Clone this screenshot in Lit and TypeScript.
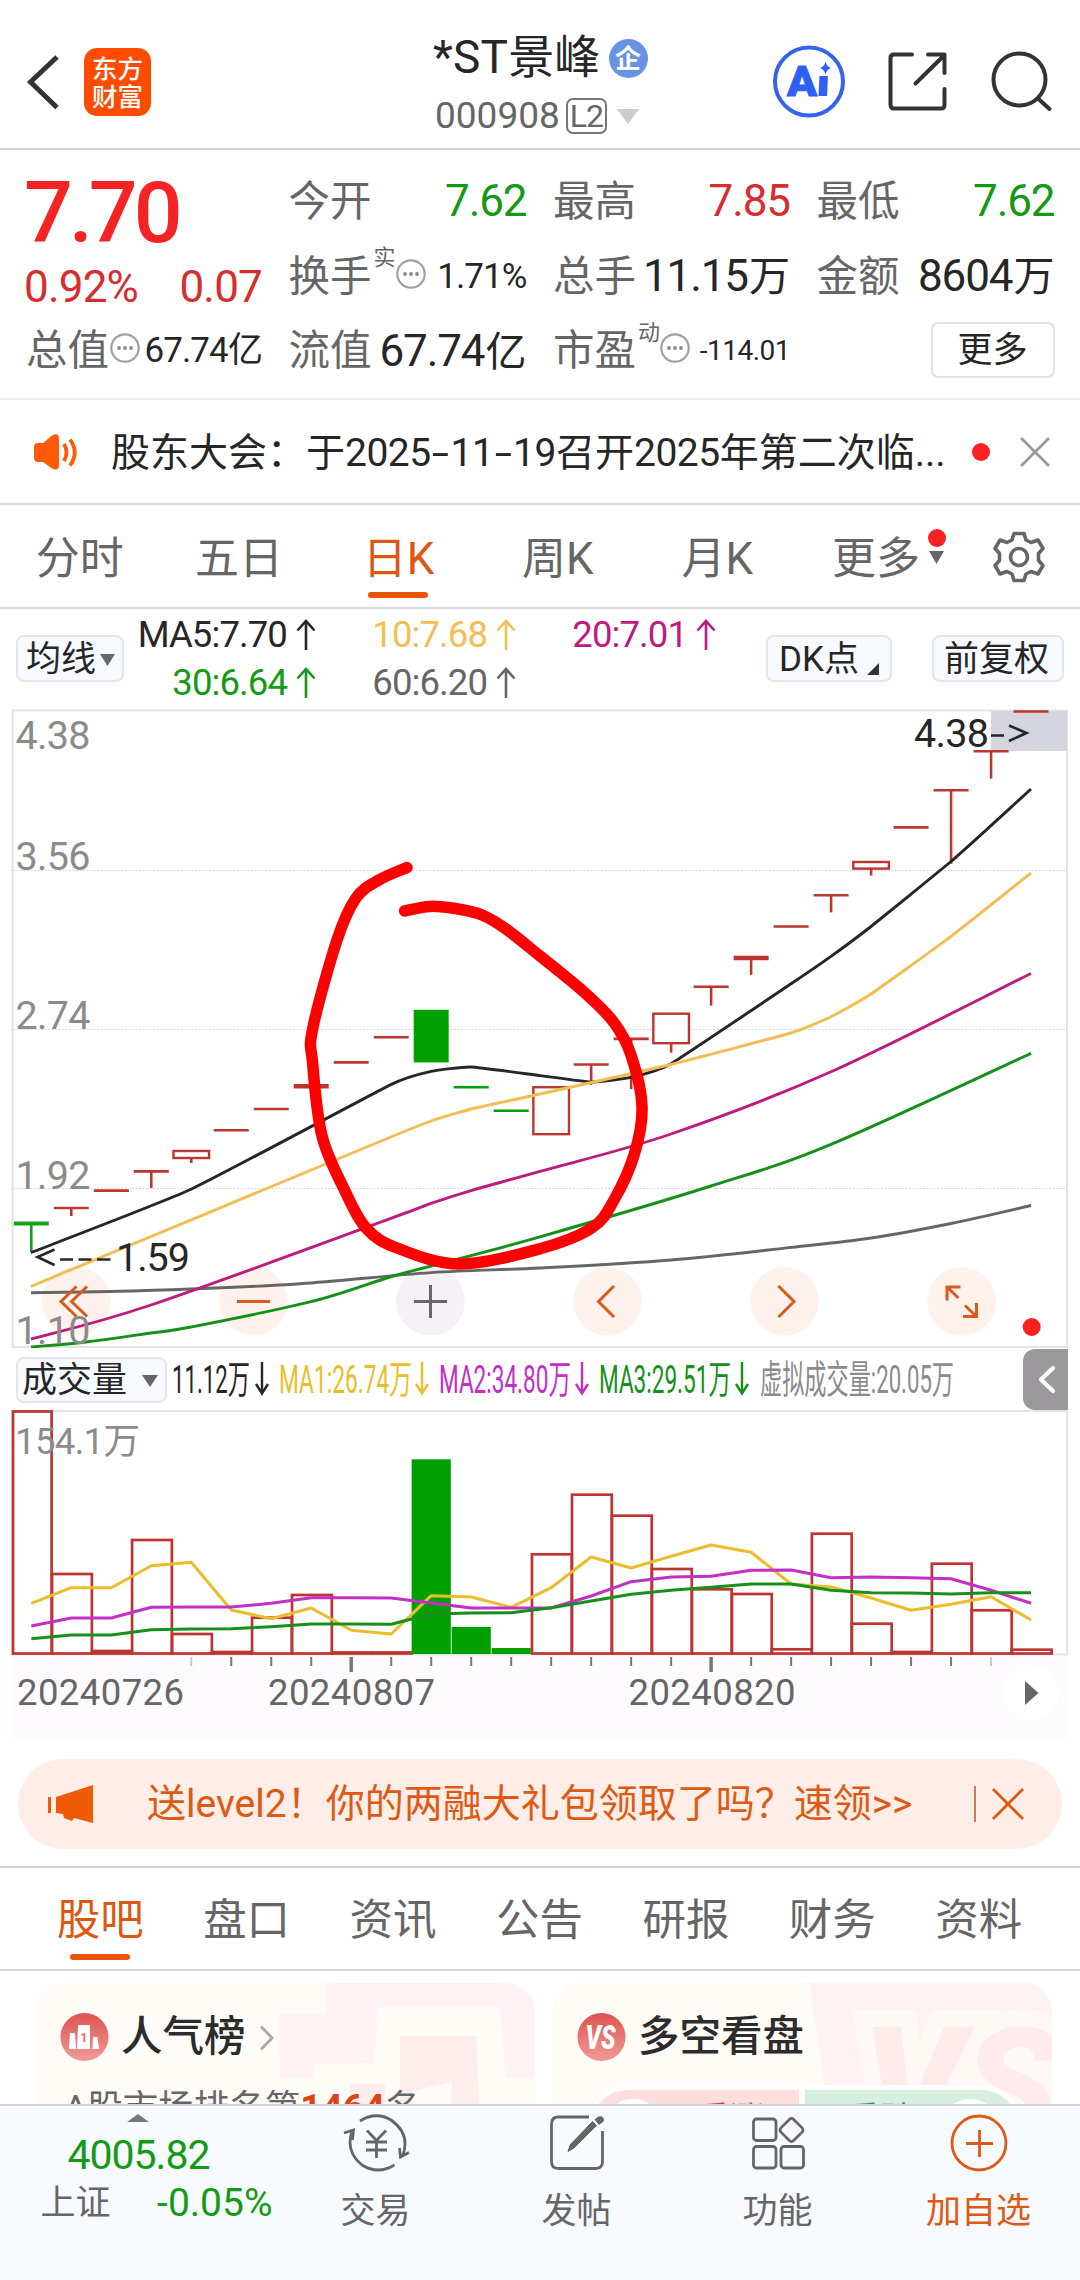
import { LitElement, html, css, svg } from "lit";
import { customElement } from "lit/decorators.js";

type Pt = [number, number];

const RED = "#bd3531";
const GREEN = "#00a000";
const X0 = 31.3;
const STEP = 39.99;
const cx = (i: number) => X0 + STEP * i;

/* Candle: t = top or flat level, b = body bottom, w = wick end, s = line weight, g = falling day */
interface Candle { t: number; b?: number; w?: number; s?: number; g?: boolean }
const candles: Candle[] = [
  { t: 1223.5, w: 1252, s: 4, g: true }, { t: 1208, w: 1216 }, { t: 1190.6 }, { t: 1171.4, w: 1188 },
  { t: 1151, b: 1158, w: 1163 }, { t: 1130.3 }, { t: 1109 }, { t: 1086.3, s: 4.5 }, { t: 1062.4 }, { t: 1037.2 },
  { t: 1009.8, b: 1062.4, g: true }, { t: 1087.2, g: true }, { t: 1110.7, g: true }, { t: 1087.2, b: 1134.2 },
  { t: 1064.5, w: 1085 }, { t: 1038.9, w: 1089 }, { t: 1013.7, b: 1043.2, w: 1052.6 }, { t: 986.8, w: 1005.6 },
  { t: 958, w: 974.8, s: 4.5 }, { t: 926.5 }, { t: 895.3, w: 912.4 }, { t: 862, b: 868.6, w: 875.6 },
  { t: 827.4 }, { t: 790.2, w: 863.7 }, { t: 751.3, w: 778.6 }, { t: 711.5 },
];

const ma: { c: string; p: Pt[] }[] = [
  { c: "#666666", p: [[31, 1292.7], [110, 1291.5], [191, 1289], [300, 1283.8], [431, 1272.6], [540, 1268], [671, 1260], [791, 1247.4], [871, 1238], [951, 1223.5], [1031, 1205.5]] },
  { c: "#16901a", p: [[31, 1347], [86, 1342], [151, 1333], [191, 1327], [311, 1301.7], [390, 1277], [431, 1266], [540, 1236.8], [711, 1186], [831, 1144.4], [1031, 1053.4]] },
  { c: "#bd1c7c", p: [[31, 1339], [151, 1305], [390.8, 1218.4], [431, 1203.4], [471, 1190.6], [540, 1171.4], [671, 1134], [831, 1071.8], [1031, 973.5]] },
  { c: "#262626", p: [[31, 1252.6], [191, 1189.3], [390.8, 1084.6], [431, 1071.4], [471, 1067], [540, 1075.6], [591, 1082], [631, 1077.4], [671, 1063.7], [791, 983.8], [831, 956.4], [871, 926.5], [951, 861.5], [991, 825.6], [1031, 789]] },
  { c: "#f3bd54", p: [[31, 1286.3], [390.8, 1137], [431, 1121], [471, 1109], [540, 1094], [671, 1064.5], [791, 1033], [831, 1016.7], [871, 994], [951, 936.3], [1031, 873]] },
];

const markPts: Pt[] = [[407, 867.5], [379, 880], [356, 898], [337, 940], [312.6, 1029], [312.6, 1063], [322, 1136], [345, 1191], [366, 1228], [397, 1248], [460, 1264], [540, 1248.7], [591.6, 1228], [614, 1200], [634.7, 1153], [642, 1106], [631, 1055], [614, 1022.6], [585, 993], [540, 956], [506, 929], [482, 915], [458, 909], [430, 906.4], [404.6, 911]];

function smooth(p: Pt[], k = 6): string {
  let d = `M${p[0][0]} ${p[0][1]}`;
  for (let i = 0; i < p.length - 1; i++) {
    const a = p[Math.max(i - 1, 0)], b = p[i], c = p[i + 1], e = p[Math.min(i + 2, p.length - 1)];
    d += ` C${b[0] + (c[0] - a[0]) / k} ${b[1] + (c[1] - a[1]) / k} ${c[0] - (e[0] - b[0]) / k} ${c[1] - (e[1] - b[1]) / k} ${c[0]} ${c[1]}`;
  }
  return d;
}

const volTops = [1411.5, 1574, 1651, 1540, 1634, 1652, 1617.7, 1595, 1652.5, 1652.5, 1459.3, 1627, 1648, 1554.3, 1494.7, 1515.7, 1569, 1589.3, 1594, 1649.3, 1533.7, 1623.7, 1652, 1563.7, 1610.3, 1649.7];
const volMa = [
  { c: "#ebbd2b", y: [1603.3, 1587.7, 1587.7, 1565.7, 1562.3, 1610, 1618.7, 1608, 1630.3, 1634, 1595.7, 1597, 1607.3, 1587.7, 1557, 1568, 1556.3, 1545, 1552.3, 1584, 1587, 1598, 1610.3, 1604.3, 1596.7, 1620] },
  { c: "#c230c6", y: [1626, 1618, 1618, 1607.3, 1607, 1607, 1603.3, 1597.7, 1597.7, 1598, 1603, 1608, 1608, 1608, 1596, 1581.7, 1577, 1576.3, 1570.3, 1570, 1577.7, 1577, 1577.7, 1578.7, 1590.3, 1603.3] },
  { c: "#16901a", y: [1638.7, 1635, 1635, 1629.7, 1629, 1628.7, 1626.7, 1624, 1624, 1624.3, 1614, 1613, 1612.7, 1607.7, 1601, 1594.3, 1590.3, 1587.3, 1584, 1584, 1590.3, 1592.7, 1593, 1594, 1592.7, 1592.7] },
];

const pts = (p: Pt[]) => p.map((q) => q.join(",")).join(" ");

@customElement("kline-chart")
class KlineChart extends LitElement {
  static styles = css`
    :host { display: block; height: 639px; }
    svg { display: block; }
    text { font-family: Roboto, "Noto Sans CJK SC", sans-serif; font-size: 39.5px; }
    .axis { fill: #8b8b8b; }
    .mark { fill: #262626; }
  `;
  candle(k: Candle, i: number) {
    const x = cx(i);
    const c = k.g ? (k.s ? "#16a01a" : GREEN) : RED;
    const wick = k.w ? svg`<line x1=${x} x2=${x} y1=${k.b ?? k.t} y2=${k.w} stroke=${c} stroke-width="2.6"/>` : null;
    if (k.b !== undefined) {
      return k.g
        ? svg`<rect x=${x - 17.5} y=${k.t} width="35" height=${k.b - k.t} fill=${c}/>`
        : svg`<rect x=${x - 17.8} y=${k.t} width="35.6" height=${k.b - k.t} fill="#fff" stroke=${c} stroke-width="2.4"/>${wick}`;
    }
    return svg`<line x1=${x - 17.5} x2=${x + 17.5} y1=${k.t} y2=${k.t} stroke=${c} stroke-width=${k.s ?? 2.6}/>${wick}`;
  }
  render() {
    const discs = [76, 253.4, 430.4, 607.5, 784.5, 961.5];
    return html`<svg width="1080" height="639" viewBox="0 709 1080 639" fill="none">
      <rect x="12.5" y="710.5" width="1054.5" height="636.5" stroke="#e4e4e4" stroke-width="2"/>
      ${[870.5, 1029.5, 1188.5].map((y) => svg`<line x1="13" x2="1067" y1=${y} y2=${y} stroke="#d8d8d8" stroke-width="1" stroke-dasharray="2 1.5"/>`)}
      <rect x="991" y="711" width="76" height="40" fill="#d4d5de"/>
      ${discs.map((x, i) => svg`<circle cx=${x} cy="1301.3" r="34.3" fill=${i === 2 ? "#f5f1f6" : "#fff2ed"}/>`)}
      ${candles.map((k, i) => this.candle(k, i))}
      ${ma.map((m, i) => (i < 3
        ? svg`<path d=${smooth(m.p)} stroke=${m.c} stroke-width="2.9"/>`
        : svg`<path d=${smooth(m.p, 14)} stroke=${m.c} stroke-width="2.9" stroke-linejoin="round"/>`))}
      <g class="axis">
        ${[["4.38", 749], ["3.56", 870], ["2.74", 1029], ["1.92", 1189], ["1.10", 1344]].map(
          ([t, y]) => svg`<text x="15.5" y=${y} textLength="75">${t}</text>`)}
      </g>
      <g class="mark">
        <text x="914" y="747" textLength="75">4.38</text>
        <text x="116" y="1271" textLength="74">1.59</text>
      </g>
      <path d="M991 735.5H1004M1009 725.5L1026.5 733L1009 741" stroke="#262626" stroke-width="2.6"/>
      <path d="M54.5 1249.5L37.5 1257L54.5 1265M60 1259.5H73M78.500 1259.500H91.500M97 1259.500H110.500" stroke="#262626" stroke-width="2.6"/>
      <g stroke="#d95a1a" stroke-width="3">
        <path d="M76.500 1286.500L61 1301.500L76.500 1316.500M87 1286.500L71.500 1301.500L87 1316.500"/>
        <path d="M237 1301.500H270"/>
        <path d="M614 1286L598.500 1301.500L614 1317M778.500 1286L794 1301.500L778.500 1317"/>
        <path d="M947 1300.500V1287H960.500M948 1288L958.500 1298M976.500 1303V1316.500H963M975.500 1315.500L965 1305.500"/>
      </g>
      <path d="M414 1301.500H447M430.500 1285V1318" stroke="#666" stroke-width="3"/>
      <circle cx="1031.700" cy="1327" r="9" fill="#fa2020"/>
      <path d=${smooth(markPts)} stroke="#ff0000" stroke-width="11.500" stroke-linecap="round" stroke-linejoin="round"/>
    </svg>`;
  }
}

@customElement("volume-chart")
class VolumeChart extends LitElement {
  static styles = css`
    :host { display: block; height: 332px; }
    svg { display: block; }
    text { font-family: Roboto, "Noto Sans CJK SC", sans-serif; font-size: 36.5px; fill: #666; }
    .top { fill: #8b8b8b; }
  `;
  render() {
    const ticks = Array.from({ length: 21 }, (_, n) => n + 4);
    return html`<svg width="1080" height="332" viewBox="0 1410 1080 332" fill="none">
      <rect x="12" y="1655" width="1055" height="85" fill="#fdfbfe"/>
      <rect x="12.500" y="1411" width="1054.500" height="243.500" fill="#fff" stroke="#e4e4e4" stroke-width="2"/>
      ${volTops.map((y, i) =>
        i >= 10 && i <= 12
          ? svg`<rect x=${cx(i) - 19.6} y=${y} width="39.2" height=${1654 - y} fill=${GREEN}/>`
          : svg`<rect x=${cx(i) - (i ? 19.2 : 18.3)} y=${y} width=${i ? 39.8 : 38.6} height=${1653.5 - y} stroke=${RED} stroke-width="2.7"/>`)}
      ${volMa.map((m) => svg`<polyline points=${pts(m.y.map((y, i) => [cx(i), y] as Pt))} stroke=${m.c} stroke-width="3" stroke-linejoin="round"/>`)}
      <text class="top" x="15" y="1453.500" textLength="125">154.1万</text>
      ${ticks.map((i) => {
        const major = i === 8 || i === 17;
        const faint = i === 4 || i === 24;
        return svg`<line x1=${cx(i)} x2=${cx(i)} y1="1657" y2=${major ? 1672 : 1666} stroke=${faint ? "#c8c8c8" : "#777"} stroke-width=${major ? 3.5 : 2}/>`;
      })}
      <text x="17" y="1704.500" textLength="167">20240726</text>
      <text x="268" y="1704.500" textLength="167">20240807</text>
      <text x="628.500" y="1704.500" textLength="167">20240820</text>
      <circle cx="1031" cy="1693" r="28" fill="#fff"/>
      <path d="M1025 1681L1038.500 1693L1025 1705Z" fill="#666"/>
    </svg>`;
  }
}

const dots = html`<svg class="dots" width="30" height="30" viewBox="0 0 30 30"><circle cx="15" cy="15" r="13.700" fill="none" stroke="#a0a0a0" stroke-width="2.200"/><g fill="#8a8a8a"><circle cx="9" cy="15" r="1.900"/><circle cx="15" cy="15" r="1.900"/><circle cx="21" cy="15" r="1.900"/></g></svg>`;
const upArrow = html`<svg class="up" width="20" height="32" viewBox="0 0 20 32" fill="none" stroke="currentColor" stroke-width="2.600"><path d="M10 31V2M1.500 11.500L10 2L18.500 11.500"/></svg>`;

@customElement("app-root")
class AppRoot extends LitElement {
  static styles = css`
    :host { display: block; width: 1080px; height: 2280px; overflow: hidden; background: #fff; color: #262626;
      font-family: Roboto, "Noto Sans CJK SC", sans-serif; line-height: 1.2; }
    * { box-sizing: border-box; }
    svg { display: block; flex: none; }
    .page { display: flex; flex-direction: column; height: 2280px; }

    .head { height: 150px; border-bottom: 2px solid #d6d6d6; display: grid; grid-template-columns: 360px 1fr 360px; }
    .left { display: flex; align-items: center; padding: 15px 0 0 26px; gap: 23px; }
    .logo { width: 67px; height: 68px; border-radius: 13px; background: #ff4c00; color: #fff; font-weight: 500;
      font-size: 25.5px; line-height: 28px; padding-top: 7px; text-align: center; }
    .center { display: flex; flex-direction: column; padding: 27px 0 0 73px; }
    .title { display: flex; align-items: center; gap: 8px; height: 62px; font-size: 46px; letter-spacing: 0.2px; }
    .ent { width: 39px; height: 39px; border-radius: 50%; background: #6992e4; color: #fff; font-weight: 700;
      font-size: 26px; line-height: 40px; text-align: center; letter-spacing: 0; }
    .code { display: flex; align-items: center; height: 54px; font-size: 37px; color: #666; padding-left: 2px; }
    .l2 { margin: 0 10px 0 6px; width: 41px; height: 36px; border: 2px solid #777; border-radius: 7px; font-size: 32px;
      line-height: 33px; text-align: center; letter-spacing: -1px; }
    .tools { display: flex; align-items: center; padding: 15px 0 0 52px; gap: 42px; }

    .quote { height: 250px; border-bottom: 2px solid #eee; display: grid; padding: 14px 25px 12px 26px;
      grid-template-columns: 236px 238px 237px 238px; column-gap: 26.500px; grid-template-rows: 75px 75px 74px; }
    .price { grid-row: 1 / 3; display: flex; flex-direction: column; color: #d62e2e; margin-left: -2px; }
    .big { font-size: 86px; font-weight: 500; line-height: 98px; letter-spacing: -4px; color: #f52424; height: 98px; }
    .chg { display: flex; justify-content: space-between; font-size: 44px; line-height: 52px; letter-spacing: -0.800px; margin-top: -1px; }
    .cell { display: flex; align-items: center; white-space: nowrap; }
    .lab { font-size: 41.500px; color: #666; }
    .val { margin-left: auto; font-size: 44px; letter-spacing: -1.100px; }
    .cjk { font-size: 41px; letter-spacing: 0; margin-left: 1px; }
    .g { color: #149a14; }
    .r { color: #d62e2e; }
    .m { font-size: 35px; letter-spacing: -0.900px; }
    .s { font-size: 28px; letter-spacing: -0.500px; }
    .sup { font-size: 22px; color: #666; align-self: flex-start; line-height: 22px; margin: 8px -1px 0 2px; }
    .dots { margin: -6px 0 0 1px; }
    .more { margin-left: auto; width: 124px; height: 56px; border: 2px solid #e2e2e2; border-radius: 7px;
      font-size: 35px; line-height: 53px; text-align: center; margin-top: -3px; }

    .notice { height: 105px; border-bottom: 2px solid #d6d6d6; display: flex; align-items: center; padding: 0 30px 0 33px; }
    .ntext { width: 836px; margin-left: 32px; padding-top: 3px; font-size: 39px; white-space: nowrap; }
    .d { letter-spacing: -0.500px; }
    .hy { display: inline-block; transform: scaleX(1.6); margin: 0 4.500px; }
    .reddot { width: 18px; height: 18px; border-radius: 50%; background: #f82222; flex: none; }
    .ndot { margin-left: 25px; }
    .x1 { margin-left: auto; }

    .tabs { height: 104px; border-bottom: 2px solid #d6d6d6; display: flex; align-items: center; padding: 5px 34px 0 0; }
    .tab { position: relative; width: 159.400px; text-align: center; font-size: 44px; line-height: 60px; color: #666; }
    .on { color: #de5711; }
    .bar { position: absolute; left: 50%; margin-left: -30px; bottom: -9px; width: 60px; height: 6px; border-radius: 3px; background: #ea5504; }
    .tmore { position: relative; width: 155px; padding-left: 35px; font-size: 44px; line-height: 60px; color: #666; }
    .tdot { position: absolute; left: 131px; top: 0; }
    .tri { position: absolute; left: 132px; top: 22px; }
    .gear { margin: -4px 0 0 auto; }

    .mas { height: 100px; display: flex; }
    .btn { display: flex; flex: none; align-items: center; height: 47px; border: 2px solid #e3e6ee; border-radius: 8px; background: #f7faff; font-size: 35px; }
    .bma { margin: 26px 0 0 16px; width: 108px; padding: 2px 0 0 8px; gap: 4px; }
    .grid { display: grid; grid-template-columns: 192px 200px 200px; grid-template-rows: 48px 48px; padding-top: 2px; }
    .ind { display: flex; align-items: center; justify-content: flex-end; gap: 9px; font-size: 36.500px; letter-spacing: -0.900px; }
    .k { color: #262626; } .y { color: #f4be55; } .p { color: #c01a80; } .gr { color: #666; }
    .bdk { margin: 26px 0 0 50px; width: 126px; padding: 2px 0 0 11px; gap: 8px; }
    .bq { margin: 26px 0 0 40px; width: 132px; padding: 2px 0 0 10px; }
    .corner { align-self: flex-end; margin-bottom: 5px; }

    .volh { height: 62px; display: flex; align-items: center; padding-left: 16px; }
    .bvol { width: 151px; height: 46px; padding: 2px 0 0 4px; gap: 15px; margin-top: 1px; }
    .vt { margin-left: 5px; overflow: visible; }
    .vt text { font-size: 39px; }
    .side { width: 45px; height: 61px; border-radius: 12px 0 0 12px; background: #9b999c; margin-left: 1px; }

    .promo { margin: 17px 18px 17px; height: 90px; border-radius: 45px; background: #feeee7; color: #dd5a14; display: flex;
      align-items: center; font-size: 39px; padding-left: 30px; white-space: nowrap; }
    .ptext { width: 880px; padding-left: 53px; }
    .sep { width: 2px; height: 36px; background: #cf7a50; margin-right: 16px; }

    .subs { height: 105px; border-top: 2px solid #d6d6d6; border-bottom: 2px solid #d6d6d6; display: flex; align-items: center; padding: 5px 28px 0 27px; }
    .sub { position: relative; flex: 1; text-align: center; font-size: 43.500px; line-height: 60px; color: #666; }
    .subs .on { color: #de5711; }

    .cards { height: 133px; overflow: hidden; display: flex; gap: 18px; padding: 12px 28px 0 36px; }
    .card { position: relative; width: 499px; height: 180px; border-radius: 28px; overflow: hidden; background: #fffbf7; }
    .art { position: absolute; left: 0; top: 0; }
    .chead { position: relative; display: flex; align-items: center; height: 108px; padding-left: 24px; font-size: 41.500px; font-weight: 500; color: #2c2c2c; }
    .chead span { margin-left: 12px; }
    .chev { margin: 2px 0 0 14px; }
    .rank { position: relative; padding-left: 28px; margin-top: -8px; font-size: 35.500px; line-height: 50px; color: #666; white-space: nowrap; }
    .num { color: #dd4414; font-weight: 700; font-size: 37px; }
    .vs { position: relative; display: flex; gap: 6px; margin: -6px 30px 0 34px; height: 80px; border: 5px solid #fff; border-radius: 40px; overflow: hidden; background: #fff; font-size: 35px; line-height: 50px; }
    .bull { flex: 1; background: #ffdedd; color: #cf4a2c; padding: 6px 34px 0 0; text-align: right; }
    .bear { flex: 1; background: #d7efdf; color: #2f9a55; padding: 6px 0 0 40px; }
    .knob { position: absolute; top: 9px; width: 62px; height: 62px; border-radius: 50%; background: #fff; }
    .k1 { left: 10px; } .k2 { right: 16px; }

    .nav { height: 176px; border-top: 2px solid #cfd2d8; background: #f7faff; display: grid; grid-template-columns: 275px repeat(4, 201px); }
    .idx { padding-top: 8px; display: flex; flex-direction: column; align-items: center; }
    .pt { font-size: 41px; line-height: 50px; margin: 8px 0 0 2px; letter-spacing: -1px; }
    .sh { display: flex; align-items: center; justify-content: space-between; width: 232px; height: 50px; margin-left: 38px; font-size: 39px; margin-top: -2px; }
    .sh .nm { font-size: 35px; color: #666; padding-top: 2px; }
    .item { display: flex; flex-direction: column; align-items: center; padding-top: 6px; font-size: 35px; line-height: 50px; color: #666; }
    .item span { margin-top: 13px; }
    .item.on { color: #dd5a14; }
  `;

  headIcons() {
    return html`
      <div class="tools">
        <svg width="74" height="74" viewBox="771 46 74 74"><circle cx="808" cy="82.500" r="34" fill="none" stroke="#3563f0" stroke-width="4"/>
          <text x="786" y="97" textLength="30" lengthAdjust="spacingAndGlyphs" font-family="Roboto, sans-serif" font-weight="900" font-size="43" fill="#2f5ff5" stroke="#2f5ff5" stroke-width="1">A</text>
          <path d="M818.500 77H827L826 97H817.500Z" fill="#2f5ff5"/><path d="M824.500 62.500Q825.500 67.500 830 69Q825.500 70.500 824.500 75.500Q823.500 70.500 819 69Q823.500 67.500 824.500 62.500Z" fill="#2f5ff5"/></svg>
        <svg width="60" height="60" viewBox="887 53 60 60" fill="none" stroke="#333" stroke-width="4" stroke-linecap="round" stroke-linejoin="round"><path d="M911 55.500H893Q889.500 55.500 889.500 59V105.500Q889.500 109.500 893 109.500H940Q943.500 109.500 943.500 106V90M927 55.500H943.500V74M942.500 57L914.500 84.500"/></svg>
        <svg width="64" height="64" viewBox="989 50 64 64" fill="none" stroke="#333" stroke-width="4" stroke-linecap="round"><circle cx="1018.500" cy="79.500" r="26"/><path d="M1037 98.500L1048.500 109"/></svg>
      </div>`;
  }

  volText(t: string, x: number, w: number, ax: number, c: string) {
    return svg`<text x=${x} y="1393" textLength=${w} lengthAdjust="spacingAndGlyphs" fill=${c}>${t}</text>
      ${ax ? svg`<path d="M${ax} 1362V1393M${ax - 6} 1384L${ax} 1393.500L${ax + 6} 1384" fill="none" stroke=${c} stroke-width="2.400"/>` : null}`;
  }

  render() {
    return html`<div class="page">
      <header class="head">
        <div class="left">
          <svg width="35" height="56" viewBox="26 54 35 56" fill="none" stroke="#333" stroke-width="5"><path d="M57 57L30.500 82L57 107.500"/></svg>
          <div class="logo">东方<br>财富</div>
        </div>
        <div class="center">
          <div class="title"><span>*ST景峰</span><span class="ent">企</span></div>
          <div class="code"><span>000908</span><span class="l2">L2</span><svg width="22" height="15"><path d="M0 0H22L11 15Z" fill="#ccc"/></svg></div>
        </div>
        ${this.headIcons()}
      </header>

      <section class="quote">
        <div class="price"><div class="big">7.70</div><div class="chg"><span>0.92%</span><span>0.07</span></div></div>
        <div class="cell"><span class="lab">今开</span><span class="val g">7.62</span></div>
        <div class="cell"><span class="lab">最高</span><span class="val r">7.85</span></div>
        <div class="cell"><span class="lab">最低</span><span class="val g">7.62</span></div>
        <div class="cell"><span class="lab">换手</span><span class="sup">实</span>${dots}<span class="val m">1.71%</span></div>
        <div class="cell"><span class="lab">总手</span><span class="val">11.15<span class="cjk">万</span></span></div>
        <div class="cell"><span class="lab">金额</span><span class="val">8604<span class="cjk">万</span></span></div>
        <div class="cell"><span class="lab">总值</span>${dots}<span class="val m">67.74亿</span></div>
        <div class="cell"><span class="lab">流值</span><span class="val">67.74<span class="cjk">亿</span></span></div>
        <div class="cell"><span class="lab">市盈</span><span class="sup">动</span>${dots}<span class="val s">-114.01</span></div>
        <div class="cell"><span class="more">更多</span></div>
      </section>

      <section class="notice">
        <svg width="46" height="38" viewBox="33 432 46 38"><path d="M34 446Q34 442 38 442H43L52 434.500Q59 431 59 438V464Q59 471 52 467.500L43 461H38Q34 461 34 457Z" fill="#ff5a0a"/><path d="M64 443Q69 451.500 64 460M70 438.500Q79.500 451.500 70 464.500" fill="none" stroke="#ff5a0a" stroke-width="3.800"/></svg>
        <div class="ntext">股东大会：于<span class="d">2025</span><span class="hy">-</span><span class="d">11</span><span class="hy">-</span><span class="d">19</span>召开<span class="d">2025</span>年第二次临...</div>
        <span class="reddot ndot"></span>
        <svg class="x1" width="30" height="30" viewBox="0 0 30 30"><path d="M1 1L29 29M29 1L1 29" stroke="#999" stroke-width="2.800"/></svg>
      </section>

      <nav class="tabs">
        <div class="tab">分时</div><div class="tab">五日</div><div class="tab on">日K<i class="bar"></i></div><div class="tab">周K</div><div class="tab">月K</div>
        <div class="tmore">更多<i class="reddot tdot"></i><svg class="tri" width="15" height="13"><path d="M0 0H15L7.500 13Z" fill="#666"/></svg></div>
        <svg class="gear" width="54" height="54" viewBox="-27 -27 54 54" fill="none" stroke="#666" stroke-width="3.600" stroke-linejoin="round"><circle r="8.500"/><path d="M-5 -23.500H5L7 -17L12 -14.500L19 -17L24 -8.500L19.500 -3.500V3.500L24 8.500L19 17L12 14.500L7 17L5 23.500H-5L-7 17L-12 14.500L-19 17L-24 8.500L-19.500 3.500V-3.500L-24 -8.500L-19 -17L-12 -14.500L-7 -17Z"/></svg>
      </nav>

      <section class="mas">
        <div class="btn bma">均线<svg width="15" height="12"><path d="M0 0H15L7.500 12Z" fill="#666"/></svg></div>
        <div class="grid">
          <div class="ind k">MA5:7.70${upArrow}</div><div class="ind y">10:7.68${upArrow}</div><div class="ind p">20:7.01${upArrow}</div>
          <div class="ind g">30:6.64${upArrow}</div><div class="ind gr">60:6.20${upArrow}</div>
        </div>
        <div class="btn bdk">DK点<svg class="corner" width="12" height="12"><path d="M12 0V12H0Z" fill="#333"/></svg></div>
        <div class="btn bq">前复权</div>
      </section>

      <kline-chart></kline-chart>

      <section class="volh">
        <div class="btn bvol">成交量<svg width="16" height="12"><path d="M0 0H16L8 12Z" fill="#666"/></svg></div>
        <svg class="vt" width="850" height="60" viewBox="172 1349 850 60" font-family="Roboto, Noto Sans CJK SC, sans-serif">
          ${this.volText("11.12万", 172, 78, 262, "#262626")}
          ${this.volText("MA1:26.74万", 279, 133, 422, "#ebbd2b")}
          ${this.volText("MA2:34.80万", 439, 132, 582, "#c230c6")}
          ${this.volText("MA3:29.51万", 599, 132, 742, "#16901a")}
          ${this.volText("虚拟成交量:20.05万", 760, 194, 0, "#8b8b8b")}
        </svg>
        <svg class="side" width="45" height="61" viewBox="1023 1349 45 61" fill="none"><path d="M1053 1368L1041 1379.500L1053 1391" stroke="#fff" stroke-width="4.200" stroke-linecap="round" stroke-linejoin="round"/></svg>
      </section>

      <volume-chart></volume-chart>

      <section class="promo">
        <svg width="46" height="40" viewBox="48 1783 46 40" fill="#ee5a06"><path d="M48 1796H51V1812H48ZM56 1796L93 1784V1822L74 1817L72 1820L64 1817L63 1813L56 1812Z"/></svg>
        <div class="ptext">送level2！你的两融大礼包领取了吗？速领&gt;&gt;</div>
        <i class="sep"></i>
        <svg width="32" height="32" viewBox="0 0 32 32"><path d="M1 1L31 31M31 1L1 31" stroke="#dd5a14" stroke-width="2.800"/></svg>
      </section>

      <nav class="subs">
        <div class="sub on">股吧<i class="bar"></i></div>
        ${["盘口", "资讯", "公告", "研报", "财务", "资料"].map((t) => html`<div class="sub">${t}</div>`)}
      </nav>

      <section class="cards">
        <div class="card">
          <svg class="art" width="499" height="125" viewBox="36 1983 499 125">
            <path d="M326 1983H535V2078L542 2078H506L500 2007H378L374.500 2063L314 2065V2077L279.500 2078L279 2014L326 2013Z" fill="#fff3f5"/>
            <path d="M400 2036H476.500L479.500 2108H451L452 2082L413 2091L411 2108H400ZM349.500 2084H385V2108H349.500Z" fill="#ffecec"/>
          </svg>
          <div class="chead"><svg width="49" height="49" viewBox="60 2013 49 49"><defs><linearGradient id="a" x1="0" y1="0" x2="0" y2="1"><stop offset="0" stop-color="#dd5350"/><stop offset="1" stop-color="#f29a96"/></linearGradient></defs><circle cx="84.500" cy="2037" r="24" fill="url(#a)"/><path d="M70 2033H75L76 2049H69ZM78 2025H90V2049H77ZM93 2037H97.500L99 2049H92.500Z" fill="#fff"/><text x="80.500" y="2042" font-size="12" font-weight="700" font-family="Roboto" fill="#dd6a66">1</text></svg>
            <span>人气榜</span><svg class="chev" width="14" height="26" viewBox="0 0 14 26"><path d="M1 1.500L12 13L1 24.500" fill="none" stroke="#aaa" stroke-width="2.800"/></svg></div>
          <div class="rank">A股市场排名第<span class="num">1464</span>名</div>
        </div>
        <div class="card">
          <svg class="art" width="499" height="125" viewBox="553 1983 499 125">
            <path d="M810 1983H1052V2108H828Z" fill="#fff2f2"/>
            <text x="862" y="2139" font-family="Roboto, sans-serif" font-style="italic" font-weight="900" font-size="158" fill="#ffebec" stroke="#fff9f5" stroke-width="34" paint-order="stroke">VS</text>
          </svg>
          <div class="chead"><svg width="49" height="49" viewBox="577 2013 49 49"><defs><linearGradient id="b" x1="0" y1="0" x2="0" y2="1"><stop offset="0" stop-color="#dd5350"/><stop offset="1" stop-color="#f29a96"/></linearGradient></defs><circle cx="601.500" cy="2037" r="24" fill="url(#b)"/><text x="585.500" y="2049" font-size="33" textLength="30" lengthAdjust="spacingAndGlyphs" font-weight="900" font-style="italic" font-family="Roboto" fill="#fff">VS</text></svg>
            <span>多空看盘</span></div>
          <div class="vs"><div class="bull">看涨</div><div class="bear">看跌</div><i class="knob k1"></i><i class="knob k2"></i></div>
        </div>
      </section>

      <footer class="nav">
        <div class="idx">
          <svg width="22" height="8"><path d="M0 8L11 0L22 8Z" fill="#777"/></svg>
          <div class="pt g">4005.82</div>
          <div class="sh"><span class="nm">上证</span><span class="g">-0.05%</span></div>
        </div>
        <div class="item">
          <svg width="68" height="62" viewBox="341 2113 68 62" fill="none" stroke="#666" stroke-width="2.800"><path d="M359 2122Q375 2112 390 2121Q410 2135 401.500 2157.500M408 2153.500L399.500 2158L398.500 2149M393.500 2166Q377 2176 361 2166Q343.500 2152 351.500 2131M343 2134L352.500 2131L351.500 2141" /><path d="M366 2131.500L375.500 2141.500L385 2131.500M375.500 2141.500V2159M365 2143H386M365 2151H386"/></svg>
          <span>交易</span>
        </div>
        <div class="item">
          <svg width="62" height="62" viewBox="546 2113 62 62" fill="none" stroke="#666" stroke-width="2.800"><path d="M589 2118H558.500Q551.500 2118 551.500 2125V2162.500Q551.500 2169.500 558.500 2169.500H595.500Q602.500 2169.500 602.500 2162.500V2132"/><path d="M568 2152.500L570 2146L592.500 2122.500L596.500 2126.500L574 2149Z" fill="#666" stroke-width="1"/><path d="M594.500 2120.500L598.500 2117.500Q601 2116.500 603 2118.500Q605 2121 603 2123L599 2126Z" fill="#666" stroke="none"/></svg>
          <span>发帖</span>
        </div>
        <div class="item">
          <svg width="62" height="62" viewBox="747 2113 62 62" fill="none" stroke="#666" stroke-width="2.800"><rect x="753.500" y="2120" width="22.500" height="21.500" rx="3"/><rect x="753.500" y="2147.500" width="22.500" height="21.500" rx="3"/><rect x="781" y="2147.500" width="22.500" height="21.500" rx="3"/><rect x="-9" y="-9" width="18" height="18" rx="3" transform="translate(791.500 2131) rotate(45)"/></svg>
          <span>功能</span>
        </div>
        <div class="item on">
          <svg width="62" height="62" viewBox="948 2113 62 62" fill="none" stroke="#dd5a14" stroke-width="2.800"><circle cx="979" cy="2144" r="27"/><path d="M966 2144.500H993M979.500 2131V2158"/></svg>
          <span>加自选</span>
        </div>
      </footer>
    </div>`;
  }
}
